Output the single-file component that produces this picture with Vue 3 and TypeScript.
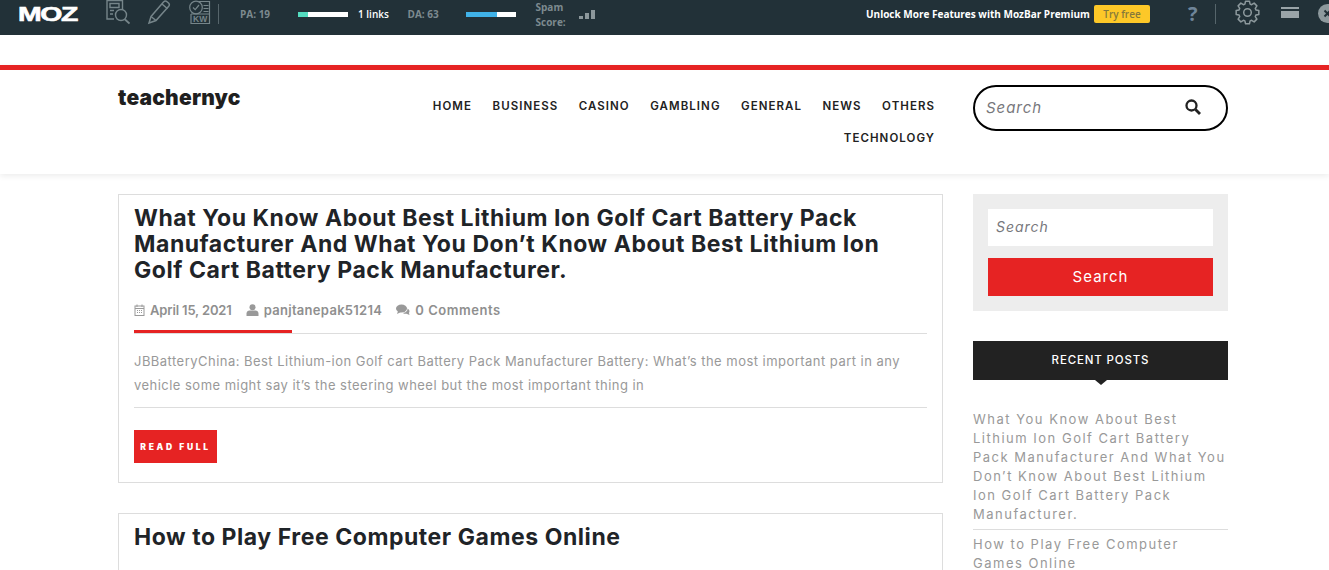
<script setup lang="ts">
const navRows: string[][] = [
  ['HOME', 'BUSINESS', 'CASINO', 'GAMBLING', 'GENERAL', 'NEWS', 'OTHERS'],
  ['TECHNOLOGY'],
]

function gearPath(teeth: number, outer: number, inner: number): string {
  const step = (Math.PI * 2) / teeth
  const pts: string[] = []
  const at = (r: number, a: number) =>
    `${(12.5 + r * Math.cos(a)).toFixed(2)} ${(12.5 + r * Math.sin(a)).toFixed(2)}`
  for (let i = 0; i < teeth; i++) {
    const a = i * step - Math.PI / 2
    pts.push(at(outer, a - 0.17), at(outer, a + 0.17), at(inner, a + 0.3), at(inner, a + step - 0.3))
  }
  return 'M' + pts.join('L') + 'Z'
}
const gear = gearPath(8, 11.5, 8.8)
</script>

<template>
  <div class="page">
    <div class="mozbar">
      <div class="moz-slot"><span class="moz-logo">MOZ</span></div>
      <div class="tools">
        <svg width="24" height="25" viewBox="0 0 24 25" fill="none" stroke="#76858a" stroke-width="1.4">
          <path d="M8 19H1V0.500h15.500V10" />
          <path d="M4 3.500h9v4H4zM4 10.500h4M4 14h3" />
          <circle cx="15" cy="15" r="5.500" />
          <path d="M19 19.500l4.500 4" stroke-width="1.800" />
        </svg>
        <svg width="24" height="25" viewBox="0 0 24 25" fill="none" stroke="#76858a" stroke-width="1.500">
          <path d="M4 16.500L16.500 2c1-1 2.500-1.200 3.500-.3l1.500 1.300c1 1 1 2.300.2 3.300L9 20.500l-7 2.500z" />
          <path d="M15 4l5.500 4.800M4 16.500l5 4" />
        </svg>
        <svg width="23" height="25" viewBox="0 0 23 25" fill="none" stroke="#76858a" stroke-width="1.200">
          <circle cx="8" cy="7.500" r="6.300" />
          <path d="M5 7.500l2.200 2.200L11 5M11 1.500h10.500v22H3V14M15.500 5.500h5M15.500 8.500h5M15.500 11.500h5M3 14h18.500" />
          <text x="5" y="22" font-size="8.500" fill="#76858a" stroke="none" font-family="Liberation Sans">KW</text>
        </svg>
      </div>
      <span class="sep"></span>
      <span class="metric pa">PA: 19</span>
      <span class="bar"><i class="fill-pa"></i></span>
      <span class="links">1 links</span>
      <span class="metric da">DA: 63</span>
      <span class="bar"><i class="fill-da"></i></span>
      <span class="metric spam">Spam<br />Score:</span>
      <span class="signal"><i></i><i></i><i></i></span>
      <div class="promo">
        <span class="unlock">Unlock More Features with MozBar Premium</span>
        <span class="try">Try free</span>
        <span class="help">?</span>
        <span class="sep sep2"></span>
        <svg class="gear" width="25" height="25" viewBox="0 0 25 25" fill="none" stroke="#8d999d" stroke-width="1.500" stroke-linejoin="round">
          <path :d="gear" />
          <circle cx="12.500" cy="12.500" r="3.800" />
        </svg>
        <span class="minimize"></span>
      </div>
      <svg class="closer" width="19" height="19" viewBox="0 0 19 19">
        <circle cx="9.500" cy="9.500" r="9.500" fill="#8d999d" />
        <path d="M6.500 6.500l6 6M12.500 6.500l-6 6" stroke="#223138" stroke-width="2" />
      </svg>
    </div>

    <div class="gap"></div>

    <header class="site-head">
      <div class="container head-row">
        <div class="brand">teachernyc</div>
        <nav class="nav">
          <div v-for="(row, r) in navRows" :key="r" class="nav-row">
            <a v-for="item in row" :key="item">{{ item }}</a>
          </div>
        </nav>
        <div class="head-search">
          <span class="ph">Search</span>
          <svg width="16" height="16" viewBox="0 0 16 16" fill="none" stroke="#222" stroke-width="2.300">
            <circle cx="6.500" cy="6.500" r="5" />
            <path d="M10.500 10.500L15 15" stroke-width="2.800" />
          </svg>
        </div>
      </div>
    </header>

    <div class="container content">
      <main class="main">
        <article class="post">
          <h2 class="title">What You Know About Best Lithium Ion Golf Cart Battery Pack Manufacturer And What You Don’t Know About Best Lithium Ion Golf Cart Battery Pack Manufacturer.</h2>
          <div class="meta">
            <span class="m m-date">
              <svg width="11" height="12" viewBox="0 0 11 12" fill="none" stroke="#999" stroke-width="1">
                <rect x="1" y="2" width="9" height="9.500" />
                <path d="M1 4.500h9M3 .5v2.500M8 .5v2.500M3 6.500h1M5 6.500h1M7 6.500h1M3 8.500h1M5 8.500h1M7 8.500h1" />
              </svg>
              April 15, 2021
            </span>
            <span class="m m-user">
              <svg width="13" height="12" viewBox="0 0 13 12" fill="#999">
                <circle cx="6.500" cy="3.200" r="3" />
                <path d="M.5 12V9.500C.5 7.500 2 6.500 3.500 6.500h6c1.500 0 3 1 3 3V12z" />
              </svg>
              panjtanepak51214
            </span>
            <span class="m m-comments">
              <svg width="14" height="12" viewBox="0 0 14 12" fill="#999">
                <ellipse cx="5.500" cy="4.500" rx="5.500" ry="4" />
                <path d="M2 7l-1 3 4-2zM11.500 4.500c2 1 2.500 3 1.500 4.500l.5 2-3-1.200c-1.500.2-2.800-.1-3.500-.8 2.500-.2 4.800-2 4.500-4.500z" />
              </svg>
              0 Comments
            </span>
          </div>
          <div class="rule"><i></i></div>
          <p class="excerpt">JBBatteryChina: Best Lithium-ion Golf cart Battery Pack Manufacturer Battery: What’s the most important part in any vehicle some might say it’s the steering wheel but the most important thing in</p>
          <div class="rule2"></div>
          <a class="read">READ FULL</a>
        </article>
        <article class="post post2">
          <h2 class="title">How to Play Free Computer Games Online</h2>
        </article>
      </main>

      <aside class="side">
        <div class="search-box">
          <div class="search-input">Search</div>
          <div class="search-btn">Search</div>
        </div>
        <div class="recent-head">RECENT POSTS</div>
        <ul class="recent">
          <li>What You Know About Best Lithium Ion Golf Cart Battery Pack Manufacturer And What You Don’t Know About Best Lithium Ion Golf Cart Battery Pack Manufacturer.</li>
          <li>How to Play Free Computer Games Online</li>
        </ul>
      </aside>
    </div>
  </div>
</template>

<style>
html, body { margin: 0; background: #fff; overflow: hidden; }
</style>

<style scoped>
.page {
  height: 570px;
  overflow: hidden;
  font-family: "Inter", "Liberation Sans", sans-serif;
  color: #222;
}
.mozbar {
  height: 35px;
  box-sizing: border-box;
  padding-bottom: 7px;
  background: #223138;
  display: flex;
  align-items: center;
  position: relative;
  font-family: "Open Sans", sans-serif;
  font-size: 10px;
  font-weight: 700;
  overflow: hidden;
}
.moz-slot { width: 88px; margin-left: 18px; }
.moz-logo {
  display: inline-block;
  color: #fff;
  font: 700 20px/1 "Liberation Sans", sans-serif;
  letter-spacing: -1px;
  -webkit-text-stroke: .6px #fff;
  transform: scaleX(1.42);
  transform-origin: left center;
}
.tools { display: flex; align-self: flex-start; gap: 17px; width: 112px; }
.sep { width: 1px; height: 20px; background: #56656b; flex: none; }
.metric { color: #7d8a8f; }
.pa { margin-left: 21px; width: 58px; }
.bar { width: 50px; height: 5px; background: #fff; display: block; }
.bar i { display: block; height: 5px; }
.fill-pa { width: 10px; background: #54dcc0; }
.fill-da { width: 31px; background: #40b2e8; }
.links { color: #fff; margin-left: 10px; width: 49.500px; font-weight: 600; }
.da { width: 58.500px; }
.spam { margin-left: 19.500px; margin-top: 2px; line-height: 15px; width: 43.500px; }
.signal { display: flex; align-items: flex-end; gap: 2px; height: 9px; }
.signal i { display: block; width: 4px; background: #8c979b; }
.signal i:nth-child(1) { height: 3px; }
.signal i:nth-child(2) { height: 6px; }
.signal i:nth-child(3) { height: 9px; }
.promo { position: absolute; left: 866px; top: 0; height: 28px; display: flex; align-items: center; }
.unlock { color: #fff; font-weight: 700; font-size: 10px; width: 228px; white-space: nowrap; }
.try {
  width: 56px; height: 18px; background: #fdc828; border-radius: 2px; color: #85783a;
  text-align: center; line-height: 18px; font-size: 10px; font-weight: 600;
}
.help { margin-left: 38px; color: #6f8599; font-size: 20px; font-weight: 700; width: 15px; line-height: 1; }
.sep2 { margin-left: 12px; }
.gear { margin-left: 19px; margin-top: -3px; flex: none; }
.minimize {
  display: block; width: 18px; height: 11px; margin-left: 21px; margin-top: -3px;
  background: linear-gradient(#9aa4a8 0 2px, transparent 2px 4px, #9aa4a8 4px);
}
.closer { position: absolute; left: 1318px; top: 4px; }

.gap { height: 30px; background: #fff; }
.container { width: 1110px; margin-left: 118px; }
.site-head {
  border-top: 5px solid #e62323;
  background: #fff;
  box-shadow: 0 2px 6px rgba(0, 0, 0, .08);
  box-sizing: border-box;
  height: 109px;
}
.head-row { display: flex; position: relative; }
.brand {
  font-weight: 900;
  font-size: 21px;
  letter-spacing: .2px;
  color: #1f1f1f;
  width: 123px;
  margin-top: 13px;
  line-height: 30px;
  white-space: nowrap;
}
.nav { width: 694px; padding-top: 20px; display: flex; flex-direction: column; align-items: flex-end; }
.nav-row { display: flex; gap: 20.500px; height: 32px; align-items: center; }
.nav a { font-weight: 600; font-size: 11.500px; letter-spacing: 1.050px; color: #222; white-space: nowrap; }
.head-search {
  position: absolute;
  left: 855px;
  top: 15px;
  width: 255px;
  height: 46px;
  box-sizing: border-box;
  border: 2px solid #000;
  border-radius: 23px;
  display: flex;
  align-items: center;
  justify-content: space-between;
  padding: 0 25px 2px 11px;
}
.ph { font-style: italic; font-size: 15px; letter-spacing: .95px; color: #77777c; }
.content { display: flex; justify-content: space-between; margin-top: 20px; }
.main { width: 825px; display: flex; flex-direction: column; gap: 30px; }
.post { border: 1px solid #ddd; padding: 10px 15px 19px; box-sizing: border-box; height: 289px; }
.post2 { height: 100px; }
.title { margin: 0; font-size: 23px; line-height: 26px; font-weight: 700; color: #1f2428; letter-spacing: .55px; }
.meta { display: flex; gap: 14px; margin-top: 18px; font-size: 13px; font-weight: 600; color: #8f8f8f; height: 18px; align-items: center; }
.m { display: flex; align-items: center; gap: 5px; }
.m-date { letter-spacing: -.15px; }
.m-user { letter-spacing: .3px; }
.m-comments { letter-spacing: .55px; }
.rule { height: 1px; background: #ddd; margin-top: 14px; position: relative; }
.rule i { position: absolute; left: 0; top: -3px; width: 158px; height: 3px; background: #e62323; }
.excerpt { margin: 15px 0 0; font-size: 13px; line-height: 24px; color: #999; letter-spacing: .47px; }
.rule2 { height: 1px; background: #ddd; margin-top: 10px; }
.read {
  display: block; width: 83px; height: 33px; margin-top: 22px; background: #e62323; color: #fff;
  text-align: center; line-height: 34px; font-size: 8.500px; font-weight: 900; letter-spacing: 2.700px;
}
.side { width: 255px; }
.search-box { background: #ededed; height: 117px; padding: 15px; box-sizing: border-box; }
.search-input {
  height: 37px; background: #fff; line-height: 35px; padding-left: 8px;
  font-style: italic; font-size: 14px; letter-spacing: .95px; color: #77777c;
}
.search-btn {
  height: 38px; margin-top: 12px; background: #e62323; color: #fff; text-align: center;
  line-height: 38px; font-size: 15px; letter-spacing: 1px;
}
.recent-head {
  position: relative; height: 39px; margin-top: 30px; background: #222; color: #fff;
  text-align: center; line-height: 39px; font-size: 11.500px; letter-spacing: .85px; font-weight: 500;
}
.recent-head::after {
  content: ""; position: absolute; left: 122px; top: 39px;
  border: 6px solid transparent; border-top: 5px solid #222; border-bottom: 0;
}
.recent { list-style: none; margin: 0; padding: 0; margin-top: 30px; }
.recent li {
  font-size: 13px; line-height: 19px; letter-spacing: 1.500px; color: #999;
  padding-bottom: 5px; margin-bottom: 5px; border-bottom: 1px solid #ddd;
}
</style>
